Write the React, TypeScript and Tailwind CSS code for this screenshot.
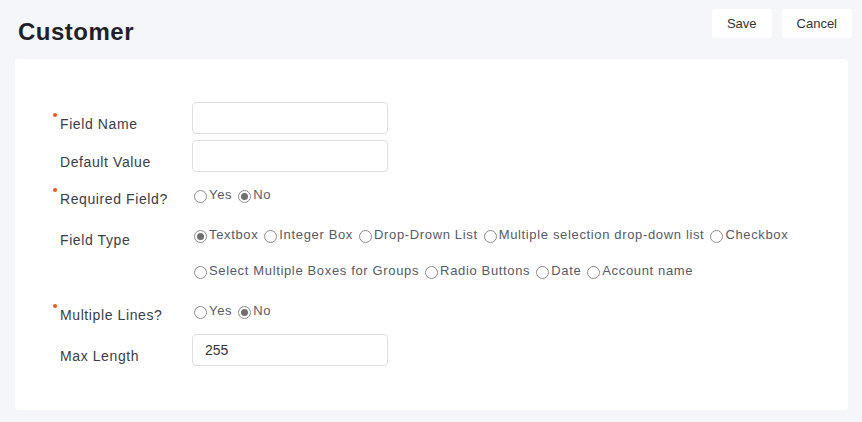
import React from "react";

type Opt = { label: string; checked?: boolean };

function Radio({ label, checked }: Opt) {
  return (
    <label className="flex items-center mr-[6px]">
      <span className="w-[13px] h-[13px] mt-[2px] mr-[2px] rounded-full border border-[#8d8d8d] bg-white flex items-center justify-center shrink-0">
        {checked && <span className="w-[7px] h-[7px] rounded-full bg-[#6f6f6f]" />}
      </span>
      <span>{label}</span>
    </label>
  );
}

function RadioLine({ options }: { options: Opt[] }) {
  return (
    <div className="flex items-center h-5 pl-[2px] text-[13px] tracking-[0.65px] text-[#555a66]">
      {options.map((o) => (
        <Radio key={o.label} {...o} />
      ))}
    </div>
  );
}

function Label({ text, required, pt }: { text: string; required?: boolean; pt: string }) {
  return (
    <div className={`w-[140px] shrink-0 flex leading-5 text-[14px] tracking-[0.6px] text-[#3a3d45] ${pt}`}>
      <span className="w-2 shrink-0 relative">
        {required && (
          <span className="absolute left-[1px] top-[-1px] w-[4px] h-[4px] rounded-full bg-[#f0561d]" />
        )}
      </span>
      <span>{text}</span>
    </div>
  );
}

function TextInput({ value }: { value?: string }) {
  return (
    <input
      defaultValue={value}
      className="w-[196px] h-[32px] rounded-[4px] border border-[#dcdfe6] bg-white px-3 text-[14px] text-[#333] outline-none"
    />
  );
}

export default function App() {
  const yesNo = [{ label: "Yes" }, { label: "No", checked: true }];

  return (
    <div className="w-[862px] h-[422px] bg-[#f4f6fa] font-['Liberation_Sans',Arial,sans-serif] overflow-hidden">
      <div className="flex items-start justify-between h-[59px] pl-[18px] pr-[10px]">
        <h1 className="pt-[19px] text-[24px] leading-[26px] font-bold tracking-[0.5px] text-[#1f2129]">
          Customer
        </h1>
        <div className="flex gap-[10px] pt-[9px]">
          <button className="h-[29px] px-[15px] rounded-[3px] bg-white text-[13px] text-[#333]">Save</button>
          <button className="h-[29px] px-[15px] rounded-[3px] bg-white text-[13px] text-[#333]">Cancel</button>
        </div>
      </div>

      <div className="mx-[15px] w-[833px] h-[351px] bg-white rounded-[4px] pt-[43px] pl-[37px]">
        <div className="flex">
          <Label text="Field Name" required pt="pt-[12px]" />
          <TextInput />
        </div>
        <div className="flex mt-[6px]">
          <Label text="Default Value" pt="pt-[12px]" />
          <TextInput />
        </div>
        <div className="flex h-[40px] mt-[6px]">
          <Label text="Required Field?" required pt="pt-[11px]" />
          <div className="pt-[7px]">
            <RadioLine options={yesNo} />
          </div>
        </div>
        <div className="flex h-[76px]">
          <Label text="Field Type" pt="pt-[12px]" />
          <div className="pt-[7px] flex flex-col gap-4">
            <RadioLine
              options={[
                { label: "Textbox", checked: true },
                { label: "Integer Box" },
                { label: "Drop-Drown List" },
                { label: "Multiple selection drop-down list" },
                { label: "Checkbox" },
              ]}
            />
            <RadioLine
              options={[
                { label: "Select Multiple Boxes for Groups" },
                { label: "Radio Buttons" },
                { label: "Date" },
                { label: "Account name" },
              ]}
            />
          </div>
        </div>
        <div className="flex h-[40px]">
          <Label text="Multiple Lines?" required pt="pt-[11px]" />
          <div className="pt-[7px]">
            <RadioLine options={yesNo} />
          </div>
        </div>
        <div className="flex">
          <Label text="Max Length" pt="pt-[12px]" />
          <TextInput value="255" />
        </div>
      </div>
    </div>
  );
}
